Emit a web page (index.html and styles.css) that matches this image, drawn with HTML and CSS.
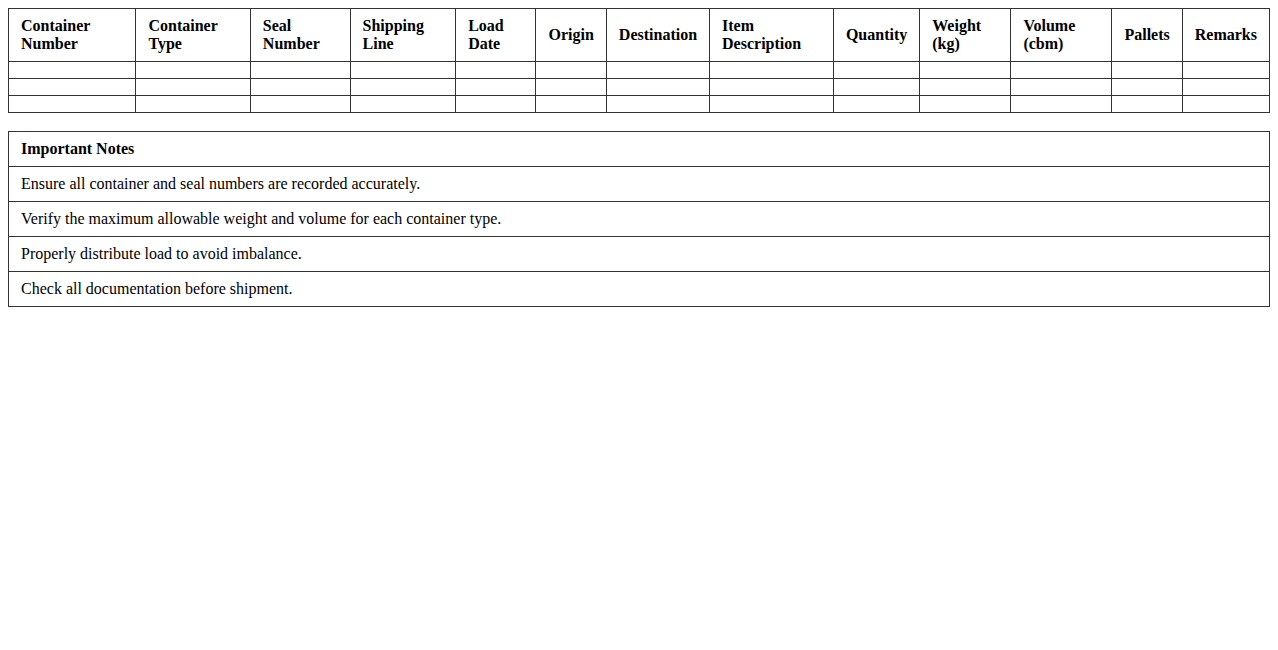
FILE: index.html
```html
<!DOCTYPE html>
<html>
<head>
<meta charset="utf-8">
<title>Container Loading</title>
<link rel="stylesheet" href="styles.css">
</head>
<body>
<table class="grid">
  <thead>
    <tr>
      <th>Container Number</th>
      <th>Container Type</th>
      <th>Seal Number</th>
      <th>Shipping Line</th>
      <th>Load Date</th>
      <th>Origin</th>
      <th>Destination</th>
      <th>Item Description</th>
      <th>Quantity</th>
      <th>Weight (kg)</th>
      <th>Volume (cbm)</th>
      <th>Pallets</th>
      <th>Remarks</th>
    </tr>
  </thead>
  <tbody>
    <tr><td></td><td></td><td></td><td></td><td></td><td></td><td></td><td></td><td></td><td></td><td></td><td></td><td></td></tr>
    <tr><td></td><td></td><td></td><td></td><td></td><td></td><td></td><td></td><td></td><td></td><td></td><td></td><td></td></tr>
    <tr><td></td><td></td><td></td><td></td><td></td><td></td><td></td><td></td><td></td><td></td><td></td><td></td><td></td></tr>
  </tbody>
</table>
<table class="notes">
  <tr><th>Important Notes</th></tr>
  <tr><td>Ensure all container and seal numbers are recorded accurately.</td></tr>
  <tr><td>Verify the maximum allowable weight and volume for each container type.</td></tr>
  <tr><td>Properly distribute load to avoid imbalance.</td></tr>
  <tr><td>Check all documentation before shipment.</td></tr>
</table>
</body>
</html>
```
FILE: styles.css
```css
body {
  margin: 8px;
  font-family: "Liberation Serif", "Times New Roman", serif;
  font-size: 16px;
  color: #000;
  background: #fff;
}
table {
  width: 100%;
  border-collapse: collapse;
}
th, td {
  border: 1px solid #333;
  padding: 8px 12px;
  text-align: left;
}
.grid th {
  font-weight: bold;
}
.notes {
  margin-top: 18px;
}
```
